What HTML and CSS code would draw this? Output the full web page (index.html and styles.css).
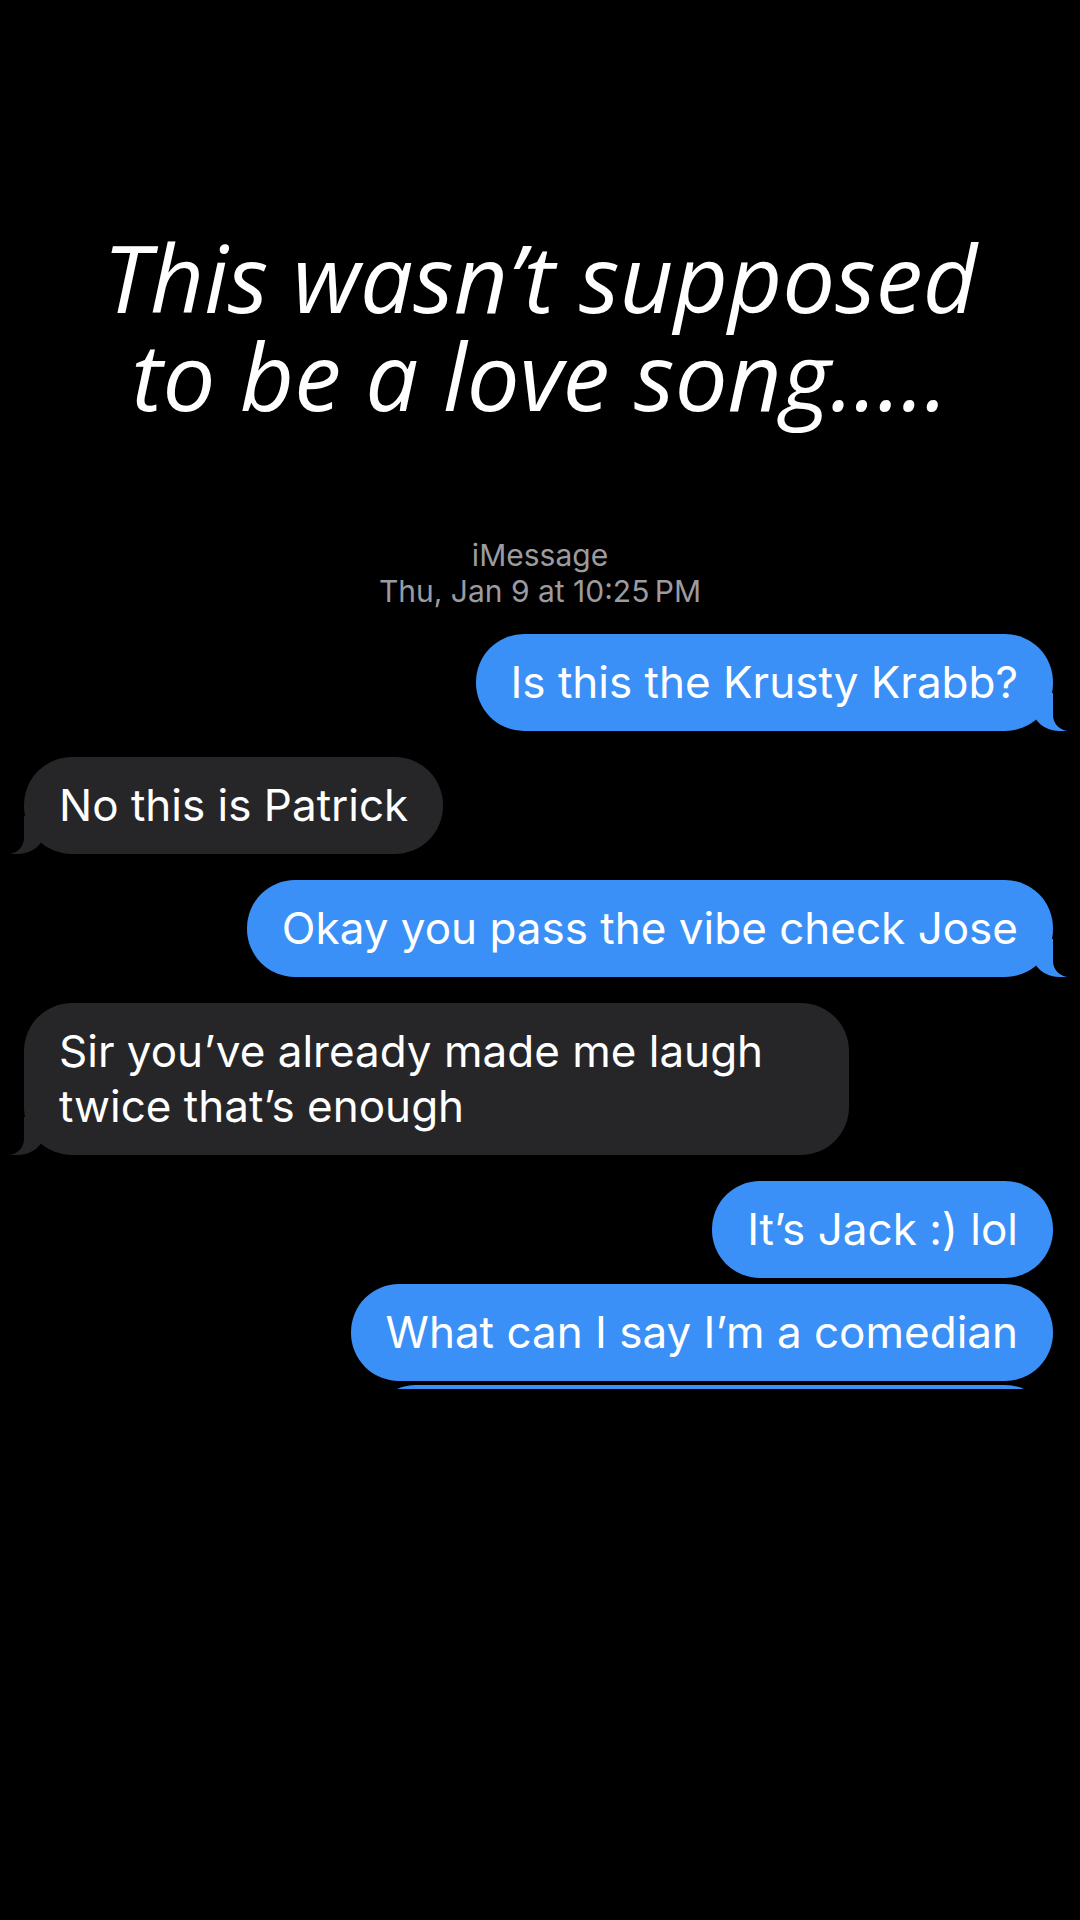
FILE: index.html
```html
<!DOCTYPE html>
<html lang="en">
<head>
    <meta charset="UTF-8">
    <meta name="viewport" content="width=device-width, initial-scale=1.0">
    <title>This wasn't supposed to be a love song</title>
    <link rel="stylesheet" href="styles.css">
</head>
<body>

<div class="screen">
    <h1 class="caption">This wasn’t supposed<br>to be a love song.....</h1>

    <div class="chat-header">
        <div class="service">iMessage</div>
        <div class="stamp">Thu, Jan 9 at 10:25&#8201;PM</div>
    </div>

    <div class="thread">
        <div class="msg sent tail">Is this the Krusty Krabb?</div>
        <div class="msg received tail">No this is Patrick</div>
        <div class="msg sent tail">Okay you pass the vibe check Jose</div>
        <div class="msg received tail">Sir you’ve already made me laugh twice that’s enough</div>
        <div class="msg sent group">It’s Jack :) lol</div>
        <div class="msg sent group">What can I say I’m a comedian</div>
        <div class="msg sent peek">&nbsp;</div>
    </div>
</div>

</body>
</html>
```

FILE: styles.css
```css
body {
    margin: 0;
    background: #000;
    color: #fff;
    font-family: 'Inter', 'Roboto', sans-serif;
}
.screen {
    width: 1080px;
    height: 1920px;
    overflow: hidden;
}
.caption {
    margin: 0;
    padding-top: 228px;
    text-align: center;
    font-family: 'Open Sans', sans-serif;
    font-style: italic;
    font-weight: 400;
    font-size: 94px;
    line-height: 98px;
    color: #fff;
}
.chat-header {
    margin-top: 113px;
    text-align: center;
    color: #9c9ca0;
    font-size: 30px;
    line-height: 36px;
}
.thread {
    margin-top: 25px;
    height: 755px;
    overflow: hidden;
    display: flex;
    flex-direction: column;
    padding: 0 27px 0 24px;
}
.msg {
    position: relative;
    max-width: 755px;
    padding: 21px 35px;
    border-radius: 48px;
    font-size: 44px;
    line-height: 55px;
    margin-bottom: 26px;
}
.sent {
    align-self: flex-end;
    background: #3a90f6;
}
.received {
    align-self: flex-start;
    background: #262628;
}
.sent.group {
    margin-bottom: 6px;
}
.msg.peek {
    margin-top: -2px;
    width: 615px;
}

/* bubble tails */
.tail::before,
.tail::after {
    content: "";
    position: absolute;
    bottom: 0;
    height: 38px;
}
.sent.tail::before {
    right: -14px;
    width: 34px;
    background: #3a90f6;
    border-bottom-left-radius: 26px 22px;
}
.sent.tail::after {
    right: -40px;
    width: 40px;
    background: #000;
    border-bottom-left-radius: 16px;
}
.received.tail::before {
    left: -14px;
    width: 34px;
    background: #262628;
    border-bottom-right-radius: 26px 22px;
}
.received.tail::after {
    left: -40px;
    width: 40px;
    background: #000;
    border-bottom-right-radius: 16px;
}
```
